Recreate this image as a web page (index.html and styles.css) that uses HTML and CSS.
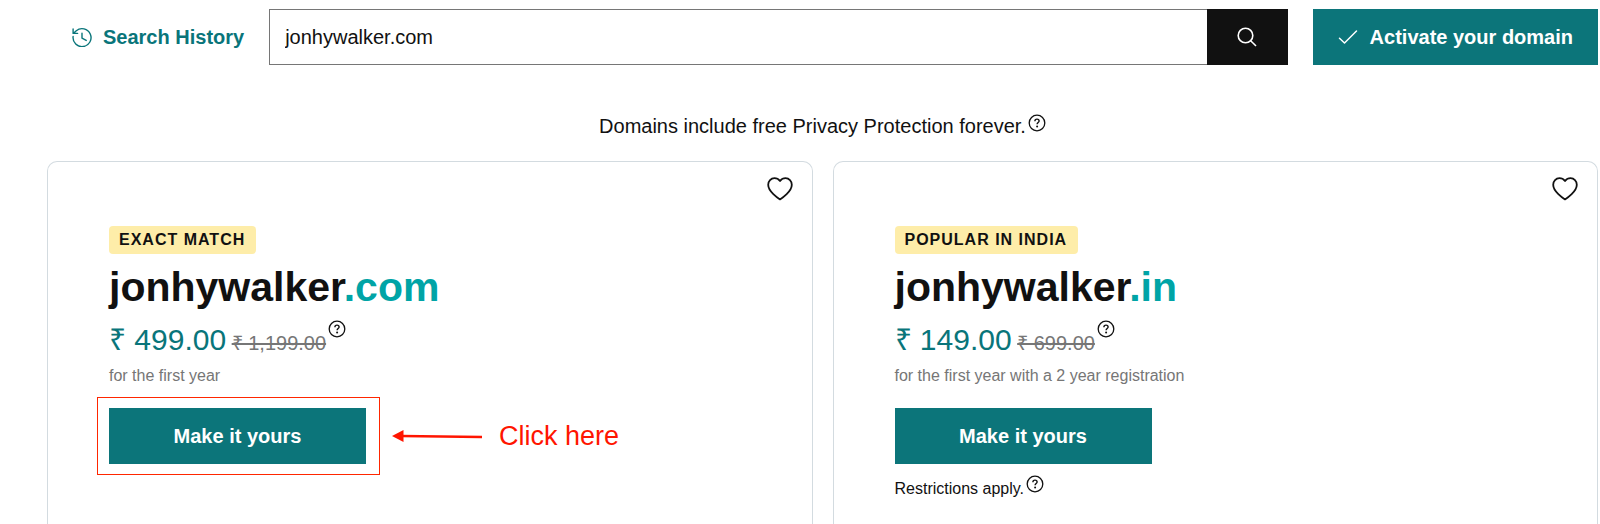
FILE: index.html
```html
<!DOCTYPE html>
<html lang="en">
<head>
<meta charset="utf-8">
<meta name="viewport" content="width=device-width, initial-scale=1">
<title>Domain search</title>
<link rel="stylesheet" href="styles.css">
</head>
<body>
<svg class="sprite" aria-hidden="true">
  <symbol id="help" viewBox="0 0 18 18">
    <circle cx="9" cy="9" r="7.8" fill="none" stroke="currentColor" stroke-width="1.3"/>
    <path d="M6.9 7.2C6.9 5.9 7.8 5.1 9 5.1s2.1.8 2.1 1.9c0 1.5-2 1.6-2 3.3" fill="none" stroke="currentColor" stroke-width="1.4"/>
    <circle cx="9.1" cy="12.5" r="1" fill="currentColor"/>
  </symbol>
  <symbol id="heart" viewBox="0 0 26 24">
    <path d="M13 22.4C11 21.2 1.2 14.6 1.2 7.8 1.2 4 4 1.2 7.4 1.2c2.3 0 4.2 1 5.6 2.8 1.4-1.8 3.3-2.8 5.6-2.8 3.400 0 6.200 2.800 6.200 6.600C24.800 14.600 15 21.200 13 22.400Z" fill="none" stroke="currentColor" stroke-width="1.8" stroke-linejoin="round"/>
  </symbol>
</svg>
<div class="page">
  <header class="topbar">
    <a class="history" href="#">
      <svg class="icon" viewBox="0 0 20 20" fill="none" stroke="currentColor" stroke-width="1.4" stroke-linecap="round" stroke-linejoin="round" aria-hidden="true">
        <path d="M1.100 9.500a9 9 0 1 0 3.200-5.800L1.500 6.200M1.100 1.900v4.500h4.500M10 6.200v5l4.200 2.200"/>
      </svg>
      Search History
    </a>
    <form class="search">
      <input class="search-input" type="text" value="jonhywalker.com" aria-label="Search domains">
      <button class="search-button" type="button" aria-label="Search">
        <svg class="icon" viewBox="0 0 20 20" fill="none" stroke="currentColor" stroke-width="1.6" aria-hidden="true">
          <circle cx="8.500" cy="8.500" r="7.300"/><path d="M13.700 13.700 19 19"/>
        </svg>
      </button>
    </form>
    <button class="button activate" type="button">
      <svg class="icon" viewBox="0 0 20 20" fill="none" stroke="currentColor" stroke-width="1.500" stroke-linecap="round" stroke-linejoin="round" aria-hidden="true">
        <path d="M1.500 11.200 6.500 16 18.500 4"/>
      </svg>
      Activate your domain
    </button>
  </header>
  <main class="results">
    <p class="notice">Domains include free Privacy Protection forever.
      <button class="help" type="button" aria-label="About Privacy Protection"><svg><use href="#help"/></svg></button>
    </p>
    <div class="cards">
      <article class="card">
        <button class="favorite" type="button" aria-label="Save jonhywalker.com"><svg><use href="#heart"/></svg></button>
        <span class="badge">EXACT MATCH</span>
        <h2 class="domain">jonhywalker<span class="tld">.com</span></h2>
        <div class="price"><span><span class="now">₹ 499.00</span> <s class="was">₹ 1,199.00</s></span><button class="help" type="button" aria-label="Price details"><svg><use href="#help"/></svg></button></div>
        <p class="term">for the first year</p>
        <div class="action">
          <button class="button buy" type="button">Make it yours</button>
          <div class="highlight"></div>
          <div class="callout">
            <svg class="arrow" viewBox="0 0 90 14" aria-hidden="true"><path d="M9 7 90 8" stroke="currentColor" stroke-width="2.500"/><path d="M0 7 11.500 1v12Z" fill="currentColor"/></svg>
            Click here
          </div>
        </div>
      </article>
      <article class="card">
        <button class="favorite" type="button" aria-label="Save jonhywalker.in"><svg><use href="#heart"/></svg></button>
        <span class="badge">POPULAR IN INDIA</span>
        <h2 class="domain">jonhywalker<span class="tld">.in</span></h2>
        <div class="price"><span><span class="now">₹ 149.00</span> <s class="was">₹ 699.00</s></span><button class="help" type="button" aria-label="Price details"><svg><use href="#help"/></svg></button></div>
        <p class="term">for the first year with a 2 year registration</p>
        <div class="action">
          <button class="button buy" type="button">Make it yours</button>
        </div>
        <p class="restrictions">Restrictions apply.
          <button class="help" type="button" aria-label="About restrictions"><svg><use href="#help"/></svg></button>
        </p>
      </article>
    </div>
  </main>
</div>
</body>
</html>
```
FILE: styles.css
```css
* {
  box-sizing: border-box;
}

body {
  margin: 0;
  background: #fff;
  color: #111;
  font: 20px/24px "Liberation Sans", Arial, sans-serif;
}

p,
h2 {
  margin: 0;
}

button {
  padding: 0;
  border: 0;
  background: none;
  color: inherit;
  font: inherit;
  cursor: pointer;
}

svg {
  display: block;
}

.sprite {
  position: absolute;
  width: 0;
  height: 0;
}

.icon {
  width: 20px;
  height: 20px;
  flex: none;
}

.page {
  display: flex;
  flex-direction: column;
  min-height: 100vh;
  padding: 9px 2px 0 47px;
}

.topbar {
  display: flex;
  align-items: stretch;
  height: 56px;
}

.history {
  display: flex;
  align-items: center;
  gap: 11px;
  padding: 0 25px;
  color: #09757a;
  font-weight: 700;
  text-decoration: none;
  white-space: nowrap;
}

.search {
  display: flex;
  flex: 1;
  min-width: 0;
  margin-right: 25px;
}

.search-input {
  flex: 1;
  min-width: 0;
  padding: 0 15px;
  border: 1px solid #767676;
  border-right: 0;
  border-radius: 0;
  background: #fff;
  color: #111;
  font: inherit;
}

.search-button {
  display: flex;
  align-items: center;
  justify-content: center;
  width: 81px;
  background: #111;
  color: #fff;
}

.button {
  display: flex;
  align-items: center;
  justify-content: center;
  height: 56px;
  background: #0c757a;
  color: #fff;
  font-weight: 700;
  white-space: nowrap;
}

.activate {
  gap: 12px;
  padding: 0 25px;
}

.results {
  display: flex;
  flex: 1;
  flex-direction: column;
}

.notice {
  display: flex;
  justify-content: center;
  gap: 2px;
  margin: 49px 0 23px;
}

.help {
  flex: none;
  width: 18px;
  height: 18px;
}

.help svg {
  width: 18px;
  height: 18px;
}

.cards {
  display: grid;
  flex: 1;
  grid-template-columns: 1fr 1fr;
  gap: 20px;
}

.card {
  position: relative;
  display: flex;
  flex-direction: column;
  align-items: flex-start;
  padding: 64px 61px 24px;
  border: 1px solid #d3dbe0;
  border-bottom: 0;
  border-radius: 10px 10px 0 0;
}

.favorite {
  position: absolute;
  top: 15px;
  right: 19px;
}

.favorite svg {
  width: 26px;
  height: 24px;
}

.badge {
  padding: 2px 11px 2px 10px;
  border-radius: 4px;
  background: #feeda9;
  font-size: 16px;
  font-weight: 700;
  letter-spacing: 1px;
}

.domain {
  margin-top: 9px;
  font-size: 41px;
  line-height: 48px;
}

.tld {
  color: #00a4a6;
}

.price {
  display: flex;
  gap: 2px;
  margin-top: 9px;
  line-height: 40px;
}

.now {
  color: #09757a;
  font-size: 30px;
}

.was {
  color: #767676;
}

.term {
  margin-top: 1px;
  color: #767676;
  font-size: 16px;
}

.action {
  position: relative;
  margin-top: 20px;
}

.buy {
  width: 257px;
}

.highlight {
  position: absolute;
  inset: -11px -14px -11px -12px;
  border: 1px solid #ff2600;
  pointer-events: none;
}

.callout {
  position: absolute;
  top: 0;
  left: 283px;
  display: flex;
  align-items: center;
  gap: 17px;
  height: 56px;
  color: #ff1500;
  font-size: 27px;
  white-space: nowrap;
}

.arrow {
  width: 90px;
  height: 14px;
}

.restrictions {
  display: flex;
  gap: 2px;
  margin-top: 11px;
  font-size: 16px;
  line-height: 28px;
}
```
